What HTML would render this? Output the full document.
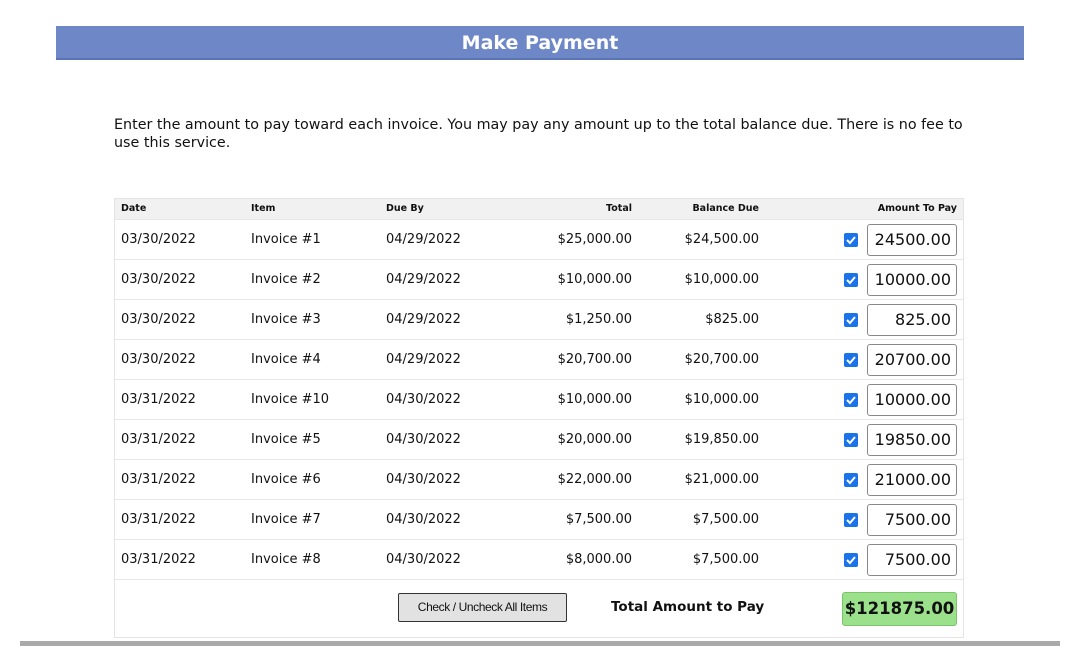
<!DOCTYPE html>
<html><head><meta charset="utf-8"><style>
*{margin:0;padding:0;box-sizing:border-box}
body{width:1080px;height:670px;background:#fff;position:relative;overflow:hidden;font-family:"DejaVu Sans","Liberation Sans",sans-serif;color:#111}
.bar{position:absolute;left:56px;top:26px;width:968px;height:34px;background:#6d87c7;color:#fff;font-weight:bold;font-size:19px;text-align:center;line-height:34px;border-bottom:2px solid #5b74b3}
.intro{position:absolute;left:114px;top:116px;width:850px;font-size:14.3px;line-height:18px}
.tbl{position:absolute;left:114px;top:198px;width:850px;height:440px;border:1px solid #e4e4e4}
.hd{position:absolute;left:0;top:0;width:848px;height:20px;background:#f1f1f1;font-size:9.5px;font-weight:bold}
.hd span,.row span{position:absolute;white-space:nowrap}
.row{position:absolute;left:0;width:848px;height:40px;border-top:1px solid #e6e6e6;font-size:13px}
.row span{top:12px}
.r{text-align:right}
.cb{position:absolute;left:729px;top:13px;width:14px;height:14px;background:#1a73e8;border-radius:2px}
.cb svg{position:absolute;left:1px;top:1px}
.inp{position:absolute;left:752px;top:4px;width:90px;height:32px;border:1px solid #888;border-radius:3px;font-size:16px;text-align:right;padding-right:5px;line-height:30px}
.btn{position:absolute;left:283px;top:394px;width:169px;height:29px;background:#e2e2e2;border:1px solid #333;border-radius:2px;font-family:"Liberation Sans",sans-serif;font-size:12px;text-align:center;line-height:27px;letter-spacing:-0.4px}
.tot{position:absolute;left:496px;top:400px;font-size:13.5px;font-weight:bold}
.amt{position:absolute;left:727px;top:393px;width:115px;height:34px;background:#9be08a;border:1px solid #7cc36b;border-radius:3px;font-size:16.5px;font-weight:bold;text-align:center;line-height:32px}
.bot{position:absolute;left:20px;top:641px;width:1040px;height:5px;background:#aaa}
</style></head><body>
<div class="bar">Make Payment</div>
<div class="intro">Enter the amount to pay toward each invoice. You may pay any amount up to the total balance due. There is no fee to use this service.</div>
<div class="tbl">
<div class="hd"><span style="left:6px;top:4px">Date</span><span style="left:136px;top:4px">Item</span><span style="left:271px;top:4px">Due By</span><span class="r" style="right:331px;top:4px">Total</span><span class="r" style="right:204px;top:4px">Balance Due</span><span class="r" style="right:6px;top:4px">Amount To Pay</span></div>
<div class="row" style="top:20px"><span style="left:6px">03/30/2022</span><span style="left:136px">Invoice #1</span><span style="left:271px">04/29/2022</span><span style="right:331px">$25,000.00</span><span style="right:204px">$24,500.00</span><div class="cb"><svg width="12" height="12"><path d="M2 6l3 3 5-6" stroke="#fff" stroke-width="2" fill="none"/></svg></div><div class="inp">24500.00</div></div>
<div class="row" style="top:60px"><span style="left:6px">03/30/2022</span><span style="left:136px">Invoice #2</span><span style="left:271px">04/29/2022</span><span style="right:331px">$10,000.00</span><span style="right:204px">$10,000.00</span><div class="cb"><svg width="12" height="12"><path d="M2 6l3 3 5-6" stroke="#fff" stroke-width="2" fill="none"/></svg></div><div class="inp">10000.00</div></div>
<div class="row" style="top:100px"><span style="left:6px">03/30/2022</span><span style="left:136px">Invoice #3</span><span style="left:271px">04/29/2022</span><span style="right:331px">$1,250.00</span><span style="right:204px">$825.00</span><div class="cb"><svg width="12" height="12"><path d="M2 6l3 3 5-6" stroke="#fff" stroke-width="2" fill="none"/></svg></div><div class="inp">825.00</div></div>
<div class="row" style="top:140px"><span style="left:6px">03/30/2022</span><span style="left:136px">Invoice #4</span><span style="left:271px">04/29/2022</span><span style="right:331px">$20,700.00</span><span style="right:204px">$20,700.00</span><div class="cb"><svg width="12" height="12"><path d="M2 6l3 3 5-6" stroke="#fff" stroke-width="2" fill="none"/></svg></div><div class="inp">20700.00</div></div>
<div class="row" style="top:180px"><span style="left:6px">03/31/2022</span><span style="left:136px">Invoice #10</span><span style="left:271px">04/30/2022</span><span style="right:331px">$10,000.00</span><span style="right:204px">$10,000.00</span><div class="cb"><svg width="12" height="12"><path d="M2 6l3 3 5-6" stroke="#fff" stroke-width="2" fill="none"/></svg></div><div class="inp">10000.00</div></div>
<div class="row" style="top:220px"><span style="left:6px">03/31/2022</span><span style="left:136px">Invoice #5</span><span style="left:271px">04/30/2022</span><span style="right:331px">$20,000.00</span><span style="right:204px">$19,850.00</span><div class="cb"><svg width="12" height="12"><path d="M2 6l3 3 5-6" stroke="#fff" stroke-width="2" fill="none"/></svg></div><div class="inp">19850.00</div></div>
<div class="row" style="top:260px"><span style="left:6px">03/31/2022</span><span style="left:136px">Invoice #6</span><span style="left:271px">04/30/2022</span><span style="right:331px">$22,000.00</span><span style="right:204px">$21,000.00</span><div class="cb"><svg width="12" height="12"><path d="M2 6l3 3 5-6" stroke="#fff" stroke-width="2" fill="none"/></svg></div><div class="inp">21000.00</div></div>
<div class="row" style="top:300px"><span style="left:6px">03/31/2022</span><span style="left:136px">Invoice #7</span><span style="left:271px">04/30/2022</span><span style="right:331px">$7,500.00</span><span style="right:204px">$7,500.00</span><div class="cb"><svg width="12" height="12"><path d="M2 6l3 3 5-6" stroke="#fff" stroke-width="2" fill="none"/></svg></div><div class="inp">7500.00</div></div>
<div class="row" style="top:340px"><span style="left:6px">03/31/2022</span><span style="left:136px">Invoice #8</span><span style="left:271px">04/30/2022</span><span style="right:331px">$8,000.00</span><span style="right:204px">$7,500.00</span><div class="cb"><svg width="12" height="12"><path d="M2 6l3 3 5-6" stroke="#fff" stroke-width="2" fill="none"/></svg></div><div class="inp">7500.00</div></div>
<div class="row" style="top:380px;height:58px"></div>
<div class="btn">Check / Uncheck All Items</div>
<div class="tot">Total Amount to Pay</div>
<div class="amt">$121875.00</div>
</div>
<div class="bot"></div>
</body></html>
